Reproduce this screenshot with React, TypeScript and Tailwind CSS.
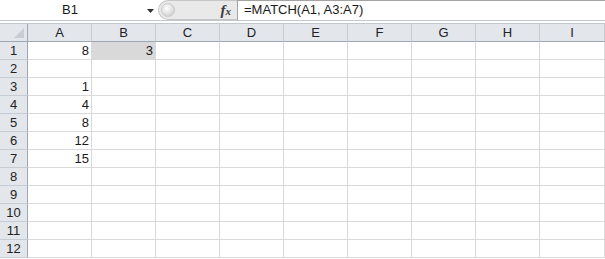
import React from "react";

const cols = ["A", "B", "C", "D", "E", "F", "G", "H", "I"];
const data: Record<string, string> = {
  A1: "8",
  B1: "3",
  A3: "1",
  A4: "4",
  A5: "8",
  A6: "12",
  A7: "15",
};

export default function App() {
  const rows = Array.from({ length: 12 }, (_, i) => i + 1);
  return (
    <div
      className="w-[605px] h-[259px] bg-white overflow-hidden text-[13px] text-[#1a1a1a]"
      style={{ fontFamily: '"Liberation Sans", Arial, sans-serif' }}
    >
      {/* formula bar */}
      <div className="flex h-[20px]">
        <div className="w-[158px] flex items-center relative bg-white">
          <div className="w-[140px] text-center leading-[20px]">B1</div>
          <svg width="8" height="5" viewBox="0 0 8 5" className="absolute left-[147px] top-[9px]">
            <path d="M0 0 H7 L3.5 4 Z" fill="#333" />
          </svg>
        </div>
        <div className="w-[79px] h-[20px] bg-[#e9e9e9] rounded-l-full border border-[#c6c6c6] border-r-0 flex items-center relative">
          <div className="ml-[2px] w-[14px] h-[14px] rounded-full border border-[#c9c9c9] bg-[radial-gradient(circle_at_40%_35%,#ffffff,#d6d6d6_70%,#c2c2c2)]" />
          <span
            className="absolute right-[6px] top-[1px] text-[15px] italic font-bold text-[#3a3a3a] leading-[16px]"
            style={{ fontFamily: '"Liberation Serif", "Times New Roman", serif' }}
          >
            f<span className="text-[11px]">x</span>
          </span>
        </div>
        <div className="flex-1 border-l border-t border-[#a3a3a3] bg-white pl-[6px] leading-[18px]">
          =MATCH(A1, A3:A7)
        </div>
      </div>
      {/* separator strip */}
      <div className="h-[4px] border-t border-b border-[#c3c8d0] bg-white" />
      {/* grid */}
      <div className="grid grid-cols-[28px_repeat(8,64px)_1fr] auto-rows-[18px]">
        <div className="bg-[#e3e6ea] border-r border-b border-[#9ea7b3] relative">
          <svg width="10" height="10" viewBox="0 0 10 10" className="absolute right-[3px] bottom-[3px]">
            <path d="M10 0 V10 H0 Z" fill="#c9ccd1" />
          </svg>
        </div>
        {cols.map((c) => (
          <div
            key={c}
            className="bg-[#e3e6ea] border-r border-[#c7ccd3] border-b border-b-[#9ea7b3] text-center leading-[17px] text-[#222]"
          >
            {c}
          </div>
        ))}
        {rows.map((r) => (
          <React.Fragment key={r}>
            <div className="bg-[#e3e6ea] border-r border-r-[#9ea7b3] border-b border-b-[#c7ccd3] text-center leading-[17px] text-[#222]">
              {r}
            </div>
            {cols.map((c) => {
              const id = `${c}${r}`;
              const sel = id === "B1";
              return (
                <div
                  key={id}
                  className={`border-r border-b border-[#d9d9d9] text-right pr-[2px] leading-[17px] ${
                    sel ? "bg-[#d9d9d9]" : "bg-white"
                  }`}
                >
                  {data[id] ?? ""}
                </div>
              );
            })}
          </React.Fragment>
        ))}
      </div>
    </div>
  );
}
